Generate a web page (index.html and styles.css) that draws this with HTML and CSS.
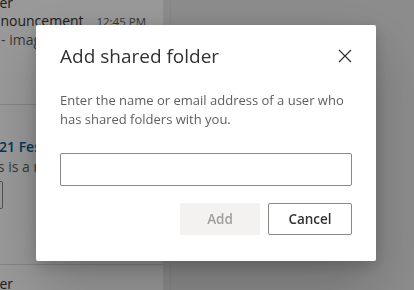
FILE: index.html
```html
<!DOCTYPE html>
<html lang="en">
<head>
  <meta charset="UTF-8">
  <meta name="viewport" content="width=device-width, initial-scale=1.0">
  <title>Add shared folder</title>
  <link rel="stylesheet" href="styles.css">
</head>
<body>
  <div class="app">
    <div class="list">
      <div class="mail-item first">
        <div class="sender"><span>Project Manager</span></div>
        <div class="row">
          <span class="subject">Announcement</span>
          <span class="time">12:45 PM</span>
        </div>
        <div class="preview">- image</div>
      </div>
      <div class="mail-item second">
        <div class="subject link">2021 Festival</div>
        <div class="preview shifted">This is a reminder</div>
        <div class="chip"></div>
      </div>
      <div class="mail-item third">
        <div class="sender"><span>Project Manager</span></div>
      </div>
    </div>
    <div class="splitter"></div>
    <div class="reading"></div>
  </div>

  <div class="overlay">
    <div class="dialog">
      <div class="dialog-header">
        <h2 class="dialog-title">Add shared folder</h2>
        <button class="close-btn" aria-label="Close">
          <svg width="14" height="14" viewBox="0 0 14 14">
            <path d="M1 1 L13 13 M13 1 L1 13" stroke="#323130" stroke-width="1.2" fill="none"/>
          </svg>
        </button>
      </div>
      <p class="dialog-text">Enter the name or email address of a user who has shared folders with you.</p>
      <input class="dialog-input" type="text">
      <div class="dialog-actions">
        <button class="btn btn-add" disabled>Add</button>
        <button class="btn btn-cancel">Cancel</button>
      </div>
    </div>
  </div>
</body>
</html>
```

FILE: styles.css
```css
body {
  margin: 0;
  font-family: "Open Sans", "Noto Sans", Arial, sans-serif;
  overflow: hidden;
  background-color: #e9e9e9;
}

.app {
  display: flex;
  height: 290px;
}

/* message list behind the dialog */
.list {
  width: 163px;
  background-color: #ffffff;
  overflow: hidden;
}

.mail-item {
  border-bottom: 1px solid #e1dfdd;
  white-space: nowrap;
  color: #323130;
  font-size: 14px;
  line-height: 18px;
  box-sizing: border-box;
}

.mail-item.first {
  height: 111px;
  margin-top: -6px;
}

.mail-item.second {
  height: 160px;
  padding-top: 33px;
}

.mail-item.third {
  height: 40px;
  padding-top: 10px;
  border-bottom: none;
}

.sender {
  display: flex;
  justify-content: flex-end;
  width: 13px;
  overflow: hidden;
}

.row {
  display: flex;
  justify-content: space-between;
  align-items: baseline;
  width: 146px;
}

.subject {
  margin-left: -17px;
}

.subject.link {
  color: #005a9e;
  font-weight: 600;
}

.time {
  color: #605e5c;
  font-size: 11.5px;
}

.preview {
  margin-left: 1px;
  color: #605e5c;
}

.preview.shifted {
  margin-left: -22px;
  margin-top: 2px;
}

.chip {
  width: 60px;
  height: 28px;
  box-sizing: border-box;
  margin: 5px 0 0 -57px;
  border: 1px solid #8a8886;
  border-radius: 2px;
}

.splitter {
  width: 7px;
  background-color: #e9e9e9;
  border-right: 1px solid #dedede;
}

.reading {
  flex: 1;
  background-color: #e9e9e9;
}

/* modal */
.overlay {
  position: fixed;
  inset: 0;
  background-color: rgba(0, 0, 0, 0.4);
  display: flex;
  align-items: center;
  justify-content: center;
}

.dialog {
  width: 340px;
  box-sizing: border-box;
  padding: 17px 24px 26px 24px;
  margin: -5px 0 0 -2px;
  background-color: #ffffff;
  border-radius: 2px;
  box-shadow: 0 25.6px 57.6px rgba(0, 0, 0, 0.22), 0 4.8px 14.4px rgba(0, 0, 0, 0.18);
}

.dialog-header {
  display: flex;
  justify-content: space-between;
  align-items: center;
}

.dialog-title {
  margin: 0;
  font-size: 19px;
  font-weight: 400;
  line-height: 28px;
  color: #323130;
}

.close-btn {
  background: none;
  border: none;
  padding: 0;
  display: flex;
  cursor: pointer;
}

.dialog-text {
  margin: 21px 0 0 0;
  font-size: 13px;
  line-height: 19px;
  color: #605e5c;
}

.dialog-input {
  display: block;
  width: 100%;
  height: 33px;
  box-sizing: border-box;
  margin-top: 24px;
  border: 1px solid #8a8886;
  border-radius: 2px;
  font-family: inherit;
}

.dialog-actions {
  display: flex;
  justify-content: flex-end;
  gap: 8px;
  margin-top: 17px;
}

.btn {
  height: 32px;
  padding: 0;
  font-family: inherit;
  font-size: 13.5px;
  font-weight: 600;
  border-radius: 2px;
}

.btn-add {
  width: 80px;
  background-color: #f3f2f1;
  color: #a19f9d;
  border: 1px solid #f3f2f1;
}

.btn-cancel {
  width: 84px;
  background-color: #ffffff;
  color: #323130;
  border: 1px solid #8a8886;
  cursor: pointer;
}
```
